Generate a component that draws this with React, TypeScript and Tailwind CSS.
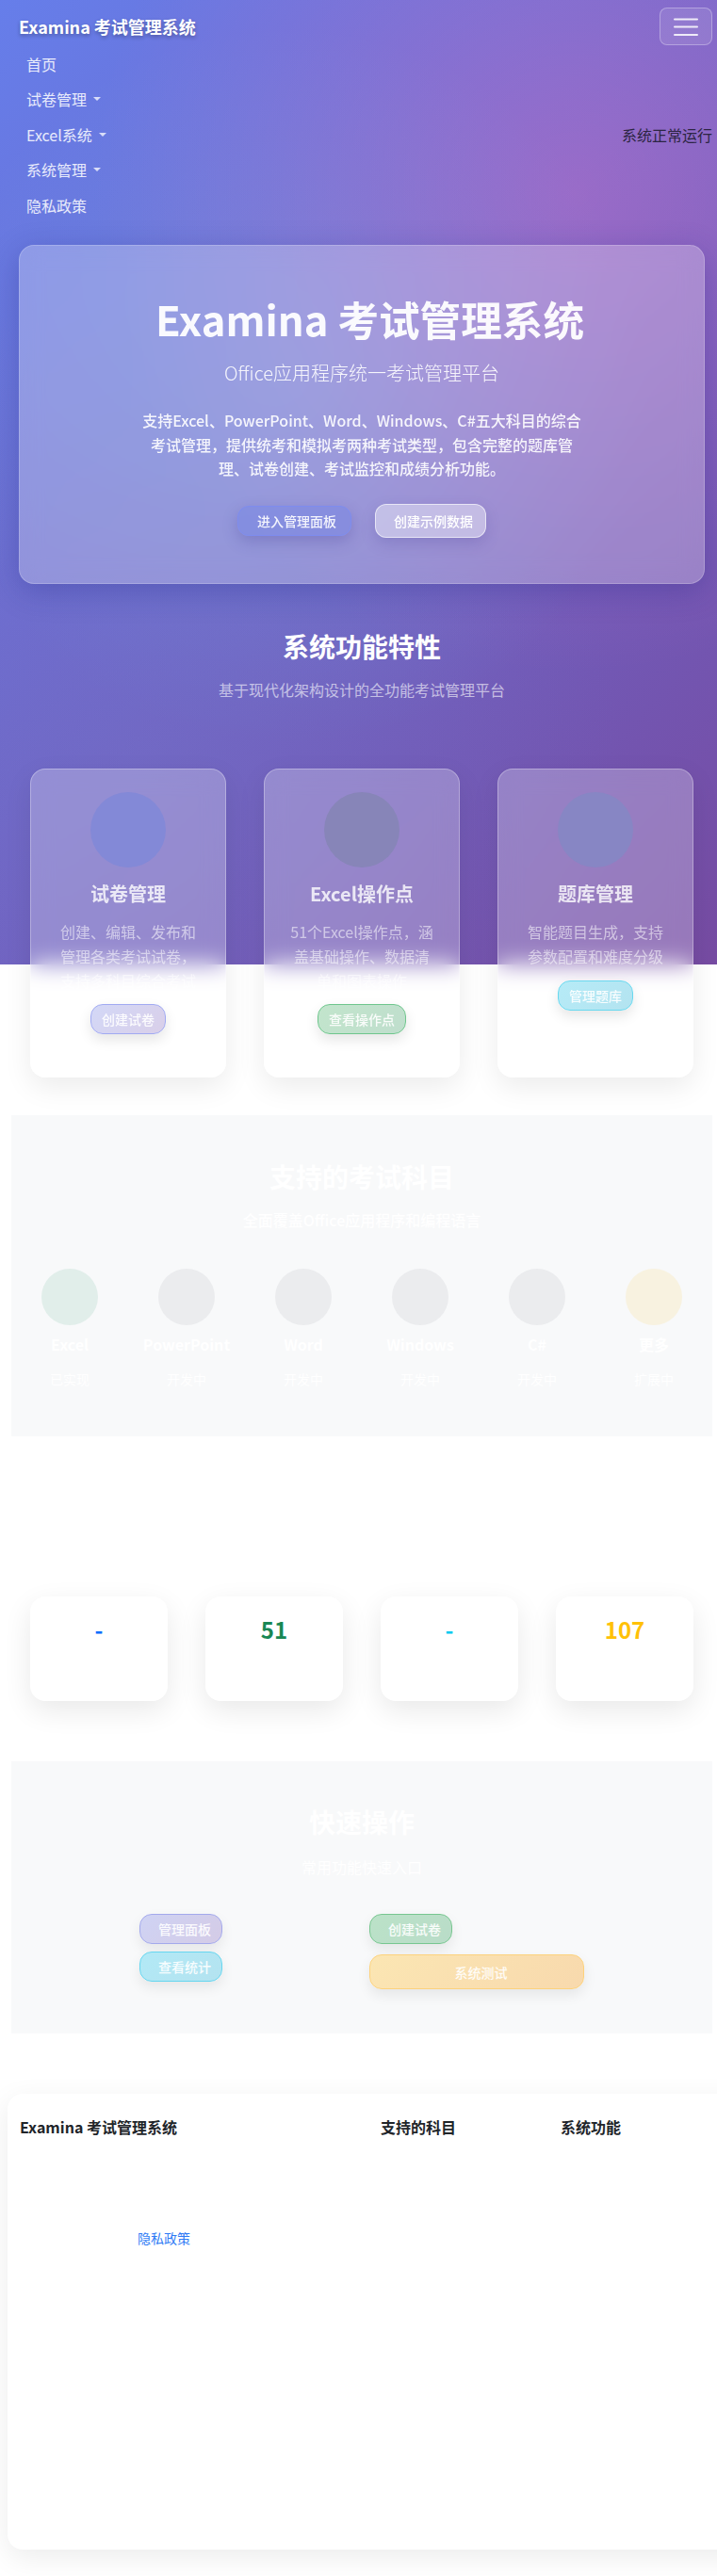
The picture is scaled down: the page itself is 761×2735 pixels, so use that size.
import React from 'react';

const features = [
  {
    title: '试卷管理',
    desc: '创建、编辑、发布和管理各类考试试卷，支持多科目综合考试',
    btn: '创建试卷',
    circle: 'bg-[#8389d7]',
    btnCls: 'bg-[linear-gradient(135deg,#d3d8f7,#d9cfe9)] border-[#a1aaf2]',
  },
  {
    title: 'Excel操作点',
    desc: '51个Excel操作点，涵盖基础操作、数据清单和图表操作',
    btn: '查看操作点',
    circle: 'bg-[#8785b8]',
    btnCls: 'bg-[linear-gradient(135deg,#c2e5cc,#bfdecd)] border-[#6fc68d]',
  },
  {
    title: '题库管理',
    desc: '智能题目生成，支持参数配置和难度分级',
    btn: '管理题库',
    circle: 'bg-[#8786c4]',
    btnCls: 'bg-[linear-gradient(135deg,#b6ebf7,#b3e3f0)] border-[#69d8ef]',
  },
];

const subjects = [
  { name: 'Excel', status: '已实现', circle: 'bg-[#e1eeea]' },
  { name: 'PowerPoint', status: '开发中', circle: 'bg-[#ebecee]' },
  { name: 'Word', status: '开发中', circle: 'bg-[#ebecee]' },
  { name: 'Windows', status: '开发中', circle: 'bg-[#ebecee]' },
  { name: 'C#', status: '开发中', circle: 'bg-[#ebecee]' },
  { name: '更多', status: '扩展中', circle: 'bg-[#f8f2e0]' },
];

const stats = [
  { value: '-', color: 'text-[#0d6efd]' },
  { value: '51', color: 'text-[#198754]' },
  { value: '-', color: 'text-[#0dcaf0]' },
  { value: '107', color: 'text-[#ffc107]' },
];

const navItems = [
  { label: '首页', caret: false },
  { label: '试卷管理', caret: true },
  { label: 'Excel系统', caret: true },
  { label: '系统管理', caret: true },
  { label: '隐私政策', caret: false },
];

function Caret() {
  return <span className="ml-[7px] inline-block h-0 w-0 border-x-[4px] border-t-[4px] border-x-transparent border-t-white/75" />;
}

export default function App() {
  return (
    <div className="w-[761px] overflow-hidden bg-white bg-[radial-gradient(circle_at_20%_80%,rgba(120,119,198,0.3)_0%,transparent_50%),radial-gradient(circle_at_80%_20%,rgba(255,119,198,0.3)_0%,transparent_50%),radial-gradient(circle_at_40%_40%,rgba(120,219,255,0.2)_0%,transparent_50%),linear-gradient(135deg,#667eea_0%,#764ba2_100%)] bg-[length:100%_1024px] bg-no-repeat pb-7 font-['Noto_Sans_CJK_SC',sans-serif]">
      {/* Navbar */}
      <nav className="pl-3 pr-[5px] pt-2">
        <div className="flex h-[41px] items-start justify-between">
          <div className="ml-2 flex h-10 items-center text-[18px] font-semibold text-white [text-shadow:0_2px_4px_rgba(0,0,0,0.3)]">
            Examina 考试管理系统
          </div>
          <button className="flex h-10 w-14 items-center justify-center rounded-[8px] border border-white/30 bg-white/10">
            <svg width="30" height="30" viewBox="0 0 30 30">
              <path d="M3 7.5h24M3 15.5h24M3 24h24" stroke="rgba(255,255,255,0.85)" strokeWidth="2" strokeLinecap="round" />
            </svg>
          </button>
        </div>
        <div className="flex items-center justify-between">
          <ul className="pl-4">
            {navItems.map((item) => (
              <li key={item.label} className="flex h-[37.5px] items-center text-base text-white/85">
                {item.label}
                {item.caret && <Caret />}
              </li>
            ))}
          </ul>
          <div className="text-base text-[#2c2543]">系统正常运行</div>
        </div>
      </nav>

      <main className="pl-3 pr-[5px]">
        {/* Hero */}
        <section className="mx-2 mt-[23.5px] rounded-2xl border border-white/20 bg-white/25 px-12 pb-12 pt-[50px] text-center shadow-[0_8px_32px_rgba(31,38,135,0.3)] backdrop-blur-md">
          <h1 className="mb-4 pl-[17px] text-[43.6px] font-bold leading-[54px] text-white/95">Examina 考试管理系统</h1>
          <p className="mb-[23px] text-xl font-light leading-[30px] text-white/90">Office应用程序统一考试管理平台</p>
          <p className="mx-auto mb-6 text-base font-medium leading-[1.6] text-white/90">
            支持Excel、PowerPoint、Word、Windows、C#五大科目的综合
            <br />
            考试管理，提供统考和模拟考两种考试类型，包含完整的题库管
            <br />
            理、试卷创建、考试监控和成绩分析功能。
          </p>
          <div className="flex items-center justify-center gap-[25px]">
            <button className="flex h-8 items-center rounded-[12px] border border-[#7e8cee] bg-[#667eea]/35 pl-5 pr-[15px] text-sm font-medium text-white/90 shadow-[0_6px_16px_rgba(60,50,140,0.25)]">
              进入管理面板
            </button>
            <button className="flex h-9 items-center rounded-[12px] border border-white/60 bg-white/40 pl-[19px] pr-[13px] text-sm font-medium text-white shadow-[0_6px_16px_rgba(60,50,140,0.2)]">
              创建示例数据
            </button>
          </div>
        </section>

        {/* Features */}
        <section className="mt-[50px] text-center">
          <h2 className="mb-[17px] text-[28px] font-bold leading-[1.2] text-white">系统功能特性</h2>
          <p className="mb-[72px] text-base leading-6 text-white/60">基于现代化架构设计的全功能考试管理平台</p>
          <div className="grid grid-cols-3">
            {features.map((f) => (
              <div key={f.title} className="px-5">
                <div className="flex h-[328px] flex-col items-center rounded-2xl border border-white/30 bg-white/25 px-6 pt-6 shadow-[0_10px_30px_rgba(0,0,0,0.08)] backdrop-blur-md">
                  <div className={`mb-4 h-20 w-20 rounded-full ${f.circle}`} />
                  <h3 className="mb-4 text-xl font-bold leading-6 text-white/80">{f.title}</h3>
                  <p className="mb-3 text-base leading-[1.6] text-white/55">{f.desc}</p>
                  <button className={`flex h-8 items-center rounded-[13px] border px-[11px] text-sm font-medium text-white/90 shadow-[0_6px_14px_rgba(0,0,0,0.1)] ${f.btnCls}`}>
                    {f.btn}
                  </button>
                </div>
              </div>
            ))}
          </div>
        </section>

        {/* Subjects */}
        <section className="mt-10 bg-[#f8f9fa] pb-[50px] pt-[49px] text-center">
          <h2 className="mb-4 text-[28px] font-bold leading-[1.2] text-white">支持的考试科目</h2>
          <p className="mb-10 text-base font-medium leading-6 text-white">全面覆盖Office应用程序和编程语言</p>
          <div className="grid grid-cols-6">
            {subjects.map((s) => (
              <div key={s.name} className="flex flex-col items-center">
                <div className={`mb-2 h-[60px] w-[60px] rounded-full ${s.circle}`} />
                <div className="text-base font-bold leading-6 text-white">{s.name}</div>
                <div className="mt-[15px] text-sm leading-[21px] text-white">{s.status}</div>
              </div>
            ))}
          </div>
        </section>

        {/* Stats */}
        <section className="mt-[170.5px] grid grid-cols-4">
          {stats.map((s, i) => (
            <div key={i} className="px-5">
              <div className="h-[111px] rounded-2xl bg-white pt-[21px] text-center shadow-[0_10px_30px_rgba(0,0,0,0.09)]">
                <div className={`text-2xl font-bold leading-[1.2] ${s.color}`}>{s.value}</div>
              </div>
            </div>
          ))}
        </section>

        {/* Quick actions */}
        <section className="mt-16 bg-[#f8f9fa] pb-[47px] pt-12 text-center">
          <h2 className="mb-[18px] text-[28px] font-bold leading-[1.2] text-white">快速操作</h2>
          <p className="mb-[38px] text-base leading-6 text-white">常用功能快速入口</p>
          <div className="mx-auto grid w-[472px] grid-cols-[228px_228px] gap-x-4">
            <div className="flex flex-col items-start gap-2">
              <button className="flex h-8 items-center rounded-[13px] border border-[#a3a9ec] bg-[linear-gradient(135deg,#cfd3f4,#d4cbe6)] pl-[19px] pr-[11px] text-sm font-medium text-white/90 shadow-[0_6px_14px_rgba(0,0,0,0.08)]">
                管理面板
              </button>
              <button className="flex h-8 items-center rounded-[13px] border border-[#66d6f0] bg-[linear-gradient(135deg,#b2e9f6,#b4e3f0)] pl-[19px] pr-[11px] text-sm font-medium text-white/90 shadow-[0_6px_14px_rgba(0,0,0,0.08)]">
                查看统计
              </button>
            </div>
            <div className="flex flex-col items-start gap-[11px]">
              <button className="flex h-8 items-center rounded-[13px] border border-[#78c690] bg-[linear-gradient(135deg,#bbe2c8,#b9dcc8)] pl-[19px] pr-[11px] text-sm font-medium text-white/90 shadow-[0_6px_14px_rgba(0,0,0,0.08)]">
                创建试卷
              </button>
              <button className="flex h-[37px] w-full items-center justify-center rounded-[13px] border border-[#fdd27c] bg-[linear-gradient(135deg,#fbe6b3,#f8d9ad)] pl-[9px] text-sm font-medium text-white/90 shadow-[0_6px_14px_rgba(0,0,0,0.08)]">
                系统测试
              </button>
            </div>
          </div>
        </section>
      </main>

      {/* Footer */}
      <footer className="ml-2 mt-16 h-[484px] w-[792px] rounded-2xl bg-white px-[13px] pt-[23px] shadow-[0_8px_30px_rgba(0,0,0,0.08)]">
        <div className="grid grid-cols-[383px_191px_192px]">
          <div>
            <h5 className="text-base font-semibold leading-6 text-[#212529]">Examina 考试管理系统</h5>
            <a className="ml-[125px] mt-[96px] block text-sm leading-[21px] text-[#2f7bf5]">隐私政策</a>
          </div>
          <h6 className="text-base font-bold leading-6 text-[#212529]">支持的科目</h6>
          <h6 className="text-base font-bold leading-6 text-[#212529]">系统功能</h6>
        </div>
      </footer>
    </div>
  );
}
